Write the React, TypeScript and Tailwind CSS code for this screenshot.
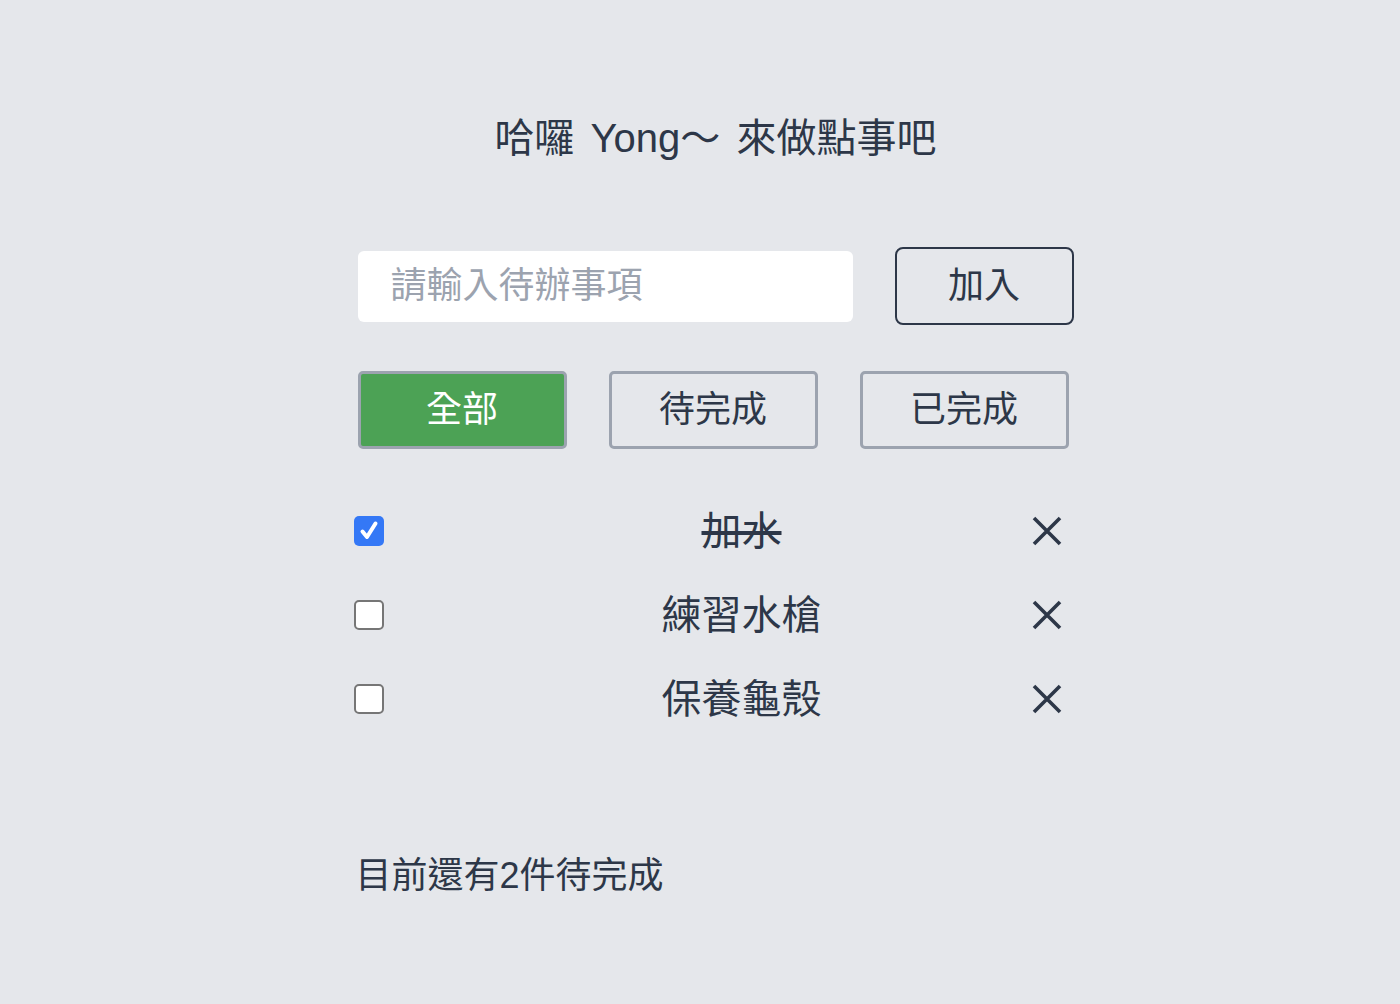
import React, { useState } from 'react';

type Todo = { id: number; text: string; done: boolean };
type Filter = 'all' | 'todo' | 'done';

const font = { fontFamily: '"Liberation Sans", "Noto Sans CJK TC", sans-serif' };

const CheckBox: React.FC<{ checked: boolean; onChange: () => void }> = ({ checked, onChange }) => (
  <button
    type="button"
    onClick={onChange}
    className={`w-[30px] h-[30px] shrink-0 rounded-[5px] flex items-center justify-center ${
      checked ? 'bg-[#3478f6]' : 'bg-white border-2 border-[#767676]'
    }`}
  >
    {checked && (
      <svg width="22" height="22" viewBox="0 0 22 22" fill="none">
        <path d="M4.5 11.5 L9 17 L17.5 3.5" stroke="white" strokeWidth="4" strokeLinecap="round" strokeLinejoin="round" />
      </svg>
    )}
  </button>
);

const CloseIcon = () => (
  <svg width="30" height="30" viewBox="0 0 30 30" fill="none">
    <path d="M2 2 L28 28 M28 2 L2 28" stroke="#2d3748" strokeWidth="3.6" />
  </svg>
);

export default function App() {
  const [todos, setTodos] = useState<Todo[]>([
    { id: 1, text: '加水', done: true },
    { id: 2, text: '練習水槍', done: false },
    { id: 3, text: '保養龜殼', done: false },
  ]);
  const [input, setInput] = useState('');
  const [filter, setFilter] = useState<Filter>('all');

  const addTodo = () => {
    if (!input.trim()) return;
    setTodos(prev => [...prev, { id: Date.now(), text: input.trim(), done: false }]);
    setInput('');
  };

  const shown = todos.filter(t => (filter === 'all' ? true : filter === 'done' ? t.done : !t.done));
  const left = todos.filter(t => !t.done).length;

  const filters: { key: Filter; label: string }[] = [
    { key: 'all', label: '全部' },
    { key: 'todo', label: '待完成' },
    { key: 'done', label: '已完成' },
  ];

  return (
    <div className="min-h-[1004px] w-full bg-[#e5e7eb] text-[#2d3748]" style={font}>
      <div className="flex justify-center pl-[31px]">
        <div className="w-[716px] flex flex-col">
          {/* Title */}
          <h1 className="mt-[108px] text-center text-[40px] leading-[60px] font-normal [word-spacing:5px]">
            哈囉 Yong～ 來做點事吧
          </h1>

          {/* Input row */}
          <div className="mt-[79px] flex items-center gap-[42px]">
            <input
              type="text"
              value={input}
              onChange={e => setInput(e.target.value)}
              onKeyDown={e => e.key === 'Enter' && addTodo()}
              placeholder="請輸入待辦事項"
              className="w-[495px] h-[71px] bg-white rounded-[6px] px-[33px] text-[36px] outline-none placeholder:text-[#9ca3af]"
              style={font}
            />
            <button
              type="button"
              onClick={addTodo}
              className="w-[179px] h-[78px] border-2 border-[#2d3748] rounded-[8px] text-[36px] flex items-center justify-center"
            >
              加入
            </button>
          </div>

          {/* Filters */}
          <div className="mt-[46px] flex gap-[42px]">
            {filters.map(f => (
              <button
                key={f.key}
                type="button"
                onClick={() => setFilter(f.key)}
                className={`w-[209px] h-[78px] border-[3px] border-[#9ca3af] rounded-[5px] text-[36px] flex items-center justify-center ${
                  filter === f.key ? 'bg-[#4ca255] text-white' : 'text-[#2d3748]'
                }`}
              >
                {f.label}
              </button>
            ))}
          </div>

          {/* Todo list */}
          <ul className="mt-[40px] -ml-[4px] w-[708px]">
            {shown.map(t => (
              <li key={t.id} className="h-[84px] flex items-center">
                <CheckBox
                  checked={t.done}
                  onChange={() => setTodos(prev => prev.map(x => (x.id === t.id ? { ...x, done: !x.done } : x)))}
                />
                <span className={`flex-1 pl-[68px] text-center text-[40px] leading-[60px] ${t.done ? 'line-through' : ''}`}>
                  {t.text}
                </span>
                <button type="button" onClick={() => setTodos(prev => prev.filter(x => x.id !== t.id))}>
                  <CloseIcon />
                </button>
              </li>
            ))}
          </ul>

          {/* Footer */}
          <p className="mt-[108px] -ml-[2px] text-[36px] leading-[54px]">目前還有{left}件待完成</p>
        </div>
      </div>
    </div>
  );
}
